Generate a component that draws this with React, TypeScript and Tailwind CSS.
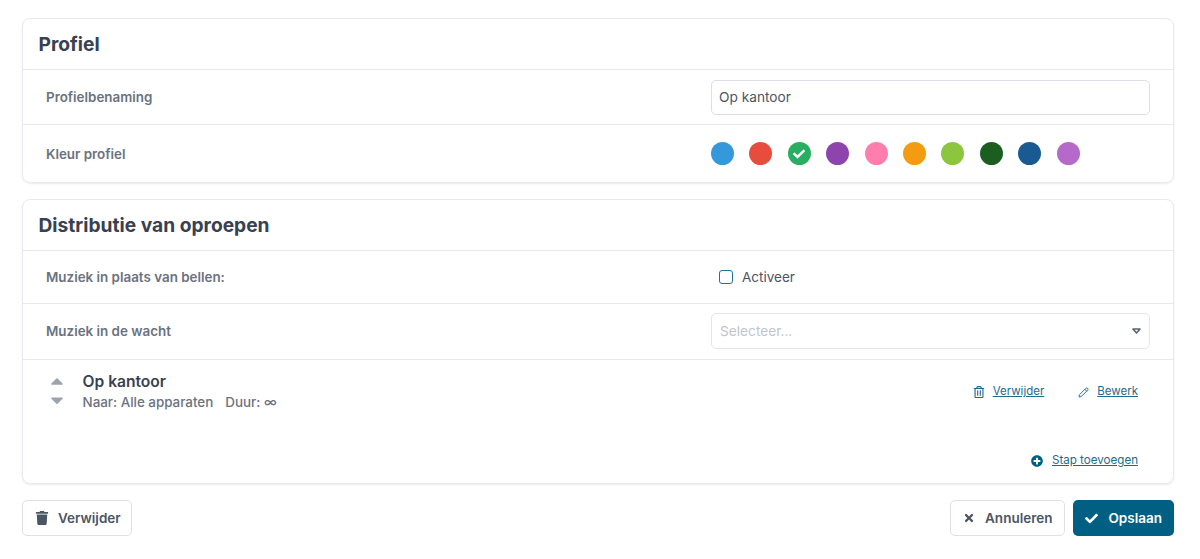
import React from "react";
import { FaTrash, FaTimes, FaCheck, FaPlusCircle, FaRegTrashAlt, FaCaretUp, FaCaretDown } from "react-icons/fa";
import { Pencil } from "lucide-react";

const colors = ["#3498db", "#e74c3c", "#27ae60", "#8e44ad", "#ff7eac", "#f39c12", "#8cc63f", "#1b5e20", "#1a5a92", "#b569c8"];

function Row({ label, className, children }: { label: string; className: string; children: React.ReactNode }) {
  return (
    <div className={`flex items-center justify-between border-t border-[#e8e9ee] pl-[23px] pr-[23px] ${className}`}>
      <span className="pt-[1px] text-[13.4px] font-semibold text-[#6b7280]">{label}</span>
      <div className="w-[439px]">{children}</div>
    </div>
  );
}

export default function App() {
  return (
    <div className="min-h-[559px] bg-white pl-[22px] pr-[26px] pt-[18px] font-['Inter',sans-serif] text-[#374151]">
      <section className="rounded-lg border border-[#e8e9ee] shadow-[0_1px_2px_rgba(0,0,0,0.08)]">
        <h2 className="flex h-[50px] items-center pl-[15.5px] text-[19.2px] font-bold text-[#374151]">Profiel</h2>
        <Row label="Profielbenaming" className="h-[55px]">
          <div className="flex h-[35px] items-center rounded-[5px] border border-[#dcdde6] pl-[7px] text-[13.7px] text-[#4b5563]">Op kantoor</div>
        </Row>
        <Row label="Kleur profiel" className="h-[58px]">
          <div className="flex gap-[15.4px]">
            {colors.map((c, i) => (
              <span key={c} className="flex h-[23px] w-[23px] items-center justify-center rounded-full" style={{ backgroundColor: c }}>
                {i === 2 && <FaCheck className="text-[12px] text-white" />}
              </span>
            ))}
          </div>
        </Row>
      </section>

      <section className="mt-[16px] rounded-lg border border-[#e8e9ee] shadow-[0_1px_2px_rgba(0,0,0,0.08)]">
        <h2 className="flex h-[50px] items-center pl-[15.5px] text-[19.2px] font-bold text-[#374151]">Distributie van oproepen</h2>
        <Row label="Muziek in plaats van bellen:" className="h-[53px]">
          <label className="flex items-center pl-[8px] text-[13.5px] text-[#4b5563]">
            <span className="h-[14px] w-[14px] rounded-[3px] border border-[#1f7396]" />
            <span className="ml-[9px]">Activeer</span>
          </label>
        </Row>
        <Row label="Muziek in de wacht" className="h-[56px] pb-[2px]">
          <div className="flex h-[36px] items-center justify-between rounded-[5px] border border-[#e5e6eb] pl-[8px] pr-[8px] text-[13.7px] text-[#c2c5cd]">
            <span className="pt-[1px]">Selecteer...</span>
            <svg width="9" height="6" viewBox="0 0 9 6">
              <path d="M1 1h7L4.5 5z" fill="none" stroke="#5b6370" strokeWidth="1.6" strokeLinejoin="round" />
            </svg>
          </div>
        </Row>
        <div className="border-t border-[#e8e9ee] pl-[23px] pr-[35px]">
          <div className="flex justify-between pt-[11px]">
            <div className="flex">
              <div className="flex w-[22px] flex-col items-center text-[#9ca3af]">
                <FaCaretUp className="text-[20px]" />
                <FaCaretDown className="mt-[-1px] text-[20px]" />
              </div>
              <div className="ml-[14.5px]">
                <div className="text-[15.6px] leading-[21px] font-semibold text-[#374151]">Op kantoor</div>
                <div className="text-[13.4px] leading-[20px] font-medium text-[#6b7280]">
                  Naar: Alle apparaten<span className="ml-[12px]">Duur: ∞</span>
                </div>
              </div>
            </div>
            <div className="flex items-center gap-[34px] pt-[1px] text-[11.5px] text-[#1f6a8c]">
              <span className="flex items-center">
                <FaRegTrashAlt className="text-[12px]" />
                <span className="ml-[8px] underline">Verwijder</span>
              </span>
              <span className="flex items-center">
                <Pencil size={11} />
                <span className="ml-[8px] underline">Bewerk</span>
              </span>
            </div>
          </div>
          <div className="flex justify-end pt-[40px] pb-[14px] text-[11.6px] text-[#1f6a8c]">
            <span className="flex items-center">
              <FaPlusCircle className="text-[12px] text-[#005f83]" />
              <span className="ml-[9px] underline">Stap toevoegen</span>
            </span>
          </div>
        </div>
      </section>

      <div className="mt-[16px] flex justify-between">
        <button className="flex h-[36px] items-center rounded-[5px] border border-[#dfe0e7] pl-[12px] pr-[10px] text-[13.5px] font-semibold text-[#4b5563]">
          <FaTrash className="text-[14px]" />
          <span className="ml-[9px]">Verwijder</span>
        </button>
        <div className="flex gap-[8px]">
          <button className="flex h-[36px] items-center rounded-[5px] border border-[#dfe0e7] pl-[12px] pr-[12px] text-[13.5px] font-semibold text-[#4b5563]">
            <FaTimes className="text-[12px]" />
            <span className="ml-[10px]">Annuleren</span>
          </button>
          <button className="flex h-[36px] items-center rounded-[5px] bg-[#005f83] pl-[12px] pr-[12px] text-[13.5px] font-semibold text-white">
            <FaCheck className="text-[13px]" />
            <span className="ml-[10px]">Opslaan</span>
          </button>
        </div>
      </div>
    </div>
  );
}
